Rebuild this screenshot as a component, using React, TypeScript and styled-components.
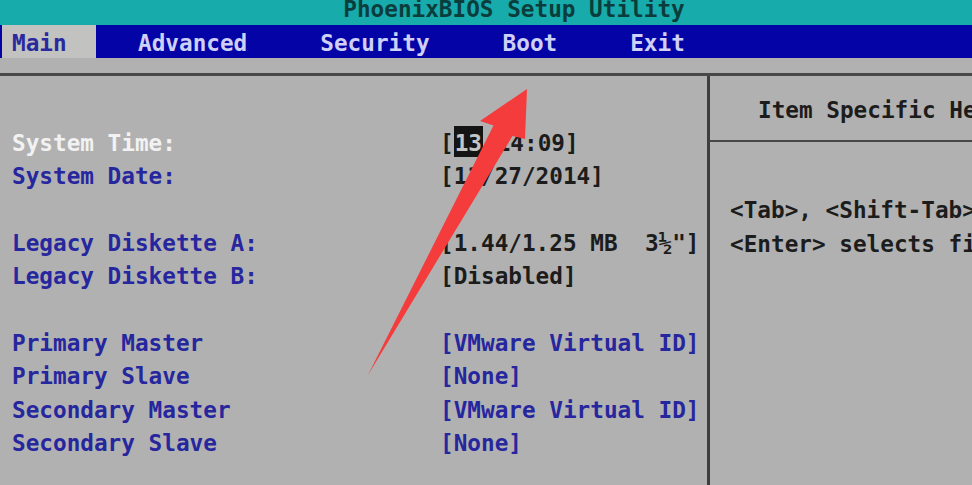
import React from "react";
import styled, { createGlobalStyle } from "styled-components";

const GlobalStyle = createGlobalStyle`
  html, body {
    margin: 0;
    padding: 0;
    overflow: hidden;
    background: #b1b1b1;
  }
`;

const ROW = 33.33;

const Page = styled.div`
  position: relative;
  width: 972px;
  height: 485px;
  overflow: hidden;
  display: flex;
  flex-direction: column;
  background: #b1b1b1;
  font-family: "DejaVu Sans Mono", "Liberation Mono", monospace;
  font-weight: bold;
  font-size: 22.7px;
  color: #1c1c1c;
`;

const TitleBar = styled.div`
  height: 25px;
  flex: none;
  background: #17abab;
  color: #0b3d3d;
  line-height: 18px;
  text-align: center;
  padding-left: 56px;
  white-space: nowrap;
  overflow: hidden;
`;

const MenuBar = styled.nav`
  height: 33px;
  flex: none;
  display: flex;
  background: #0404a6;
  line-height: 30px;
  padding-top: 3px;
  box-sizing: border-box;
  white-space: nowrap;
`;

const Tab = styled.div<{ $active?: boolean }>`
  color: ${(p) => (p.$active ? "#2a2a9e" : "#cfd0f6")};
  background: ${(p) => (p.$active ? "#c2c2c0" : "transparent")};
  margin-top: ${(p) => (p.$active ? "-3px" : "0")};
  padding-top: ${(p) => (p.$active ? "3px" : "0")};
  margin-left: ${(p) => (p.$active ? "2px" : "0")};
  width: ${(p) => (p.$active ? "84px" : "auto")};
  padding-left: ${(p) => (p.$active ? "10px" : "42px")};
  padding-right: ${(p) => (p.$active ? "0" : "31px")};
`;

const Frame = styled.div`
  margin-top: 15px;
  flex: 1;
  display: grid;
  grid-template-columns: 710px 1fr;
  border-top: 3px solid #484848;
  min-height: 0;
`;

const LeftPanel = styled.section`
  border-right: 3px solid #3e3e3e;
  padding: 51px 0 0 12px;
`;

const Row = styled.div`
  display: grid;
  grid-template-columns: 428px 1fr;
  height: ${ROW}px;
  line-height: ${ROW}px;
  white-space: pre;
`;

const Spacer = styled.div`
  height: ${ROW}px;
`;

const Label = styled.span<{ $current?: boolean }>`
  color: ${(p) => (p.$current ? "#f2f2f2" : "#26269e")};
`;

const Value = styled.span<{ $blue?: boolean }>`
  color: ${(p) => (p.$blue ? "#26269e" : "#1c1c1c")};
`;

const Cursor = styled.span`
  background: #141414;
  color: #c4c4c4;
  padding: 4px 1px 1px;
`;

const RightPanel = styled.aside`
  overflow: hidden;
  white-space: nowrap;
  color: #1c1c1c;
`;

const HelpHeader = styled.div`
  padding: 18px 0 13px 48px;
  line-height: ${ROW}px;
  border-bottom: 2px solid #484848;
`;

const HelpBody = styled.div`
  padding: 52px 0 0 20px;
  line-height: ${ROW}px;
`;

const Arrow = styled.svg`
  position: absolute;
  left: 0;
  top: 0;
  width: 972px;
  height: 485px;
  pointer-events: none;
`;

export default function App() {
  return (
    <Page>
      <GlobalStyle />
      <TitleBar>PhoenixBIOS Setup Utility</TitleBar>
      <MenuBar>
        <Tab $active>Main</Tab>
        <Tab>Advanced</Tab>
        <Tab>Security</Tab>
        <Tab>Boot</Tab>
        <Tab>Exit</Tab>
      </MenuBar>
      <Frame>
        <LeftPanel>
          <Row>
            <Label $current>System Time:</Label>
            <Value>
              [<Cursor>13</Cursor>:14:09]
            </Value>
          </Row>
          <Row>
            <Label>System Date:</Label>
            <Value>[11/27/2014]</Value>
          </Row>
          <Spacer />
          <Row>
            <Label>Legacy Diskette A:</Label>
            <Value>[1.44/1.25 MB  3½"]</Value>
          </Row>
          <Row>
            <Label>Legacy Diskette B:</Label>
            <Value>[Disabled]</Value>
          </Row>
          <Spacer />
          <Row>
            <Label>Primary Master</Label>
            <Value $blue>[VMware Virtual ID]</Value>
          </Row>
          <Row>
            <Label>Primary Slave</Label>
            <Value $blue>[None]</Value>
          </Row>
          <Row>
            <Label>Secondary Master</Label>
            <Value $blue>[VMware Virtual ID]</Value>
          </Row>
          <Row>
            <Label>Secondary Slave</Label>
            <Value $blue>[None]</Value>
          </Row>
        </LeftPanel>
        <RightPanel>
          <HelpHeader>Item Specific Help</HelpHeader>
          <HelpBody>
            <div>&lt;Tab&gt;, &lt;Shift-Tab&gt;, or</div>
            <div>&lt;Enter&gt; selects field.</div>
          </HelpBody>
        </RightPanel>
      </Frame>
      <Arrow viewBox="0 0 972 485">
        <polygon
          points="527,89 525,139 512.5,136 368,375 493.5,125.5 480,121"
          fill="#f43c3c"
        />
      </Arrow>
    </Page>
  );
}
